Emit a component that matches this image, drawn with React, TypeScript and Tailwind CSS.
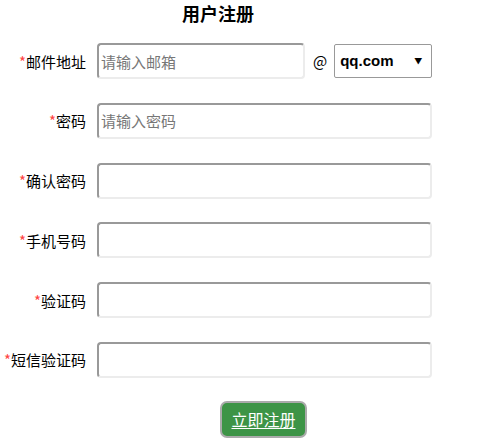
import React from 'react';

const font = { fontFamily: '"Noto Sans CJK SC", "Liberation Sans", sans-serif' };

const inputCls =
  'h-[36px] rounded-[4px] border-2 border-t-[#999] border-l-[#999] border-b-[#ececec] border-r-[#ececec] bg-white px-[2px] text-[15px] text-black placeholder:text-[#777] outline-none';

const Label = ({ text }: { text: string }) => (
  <label className="text-right text-[15px] text-black leading-none whitespace-nowrap">
    <span className="text-[#f44]">*</span>
    {text}
  </label>
);

const rows = [
  { label: '确认密码', type: 'password' },
  { label: '手机号码', type: 'text' },
  { label: '验证码', type: 'text' },
  { label: '短信验证码', type: 'text' },
];

export default function App() {
  return (
    <div className="w-[498px] h-[444px] bg-white" style={font}>
      <div className="w-[436px]">
        <h1 className="text-center text-[18px] font-bold leading-none pt-[4px]">用户注册</h1>
        <div className="mt-[21px] grid grid-cols-[86px_1fr] gap-x-[11px] gap-y-[23.8px] items-center">
          <Label text="邮件地址" />
          <div className="flex items-center">
            <input className={`${inputCls} w-[208px]`} placeholder="请输入邮箱" />
            <span className="ml-[8px] text-[15px] text-black">@</span>
            <div className="ml-[7px] flex h-[34px] w-[98px] items-center justify-between rounded-[2px] border border-[#999] bg-white pl-[5px] pr-[9px]">
              <span className="text-[15px] font-bold" style={{ fontFamily: '"Liberation Sans", sans-serif' }}>
                qq.com
              </span>
              <span className="text-[8px] leading-none">▼</span>
            </div>
          </div>

          <Label text="密码" />
          <input type="password" className={`${inputCls} w-[335px]`} placeholder="请输入密码" />

          {rows.map((r) => (
            <React.Fragment key={r.label}>
              <Label text={r.label} />
              <input type={r.type} className={`${inputCls} w-[335px]`} />
            </React.Fragment>
          ))}
        </div>
        <div className="mt-[23px] flex pl-[220px]">
          <button className="h-[37px] w-[87px] rounded-[7px] border-2 border-[#aaa] bg-[#3d9446] text-[16px] text-white underline underline-offset-2">
            立即注册
          </button>
        </div>
      </div>
    </div>
  );
}
